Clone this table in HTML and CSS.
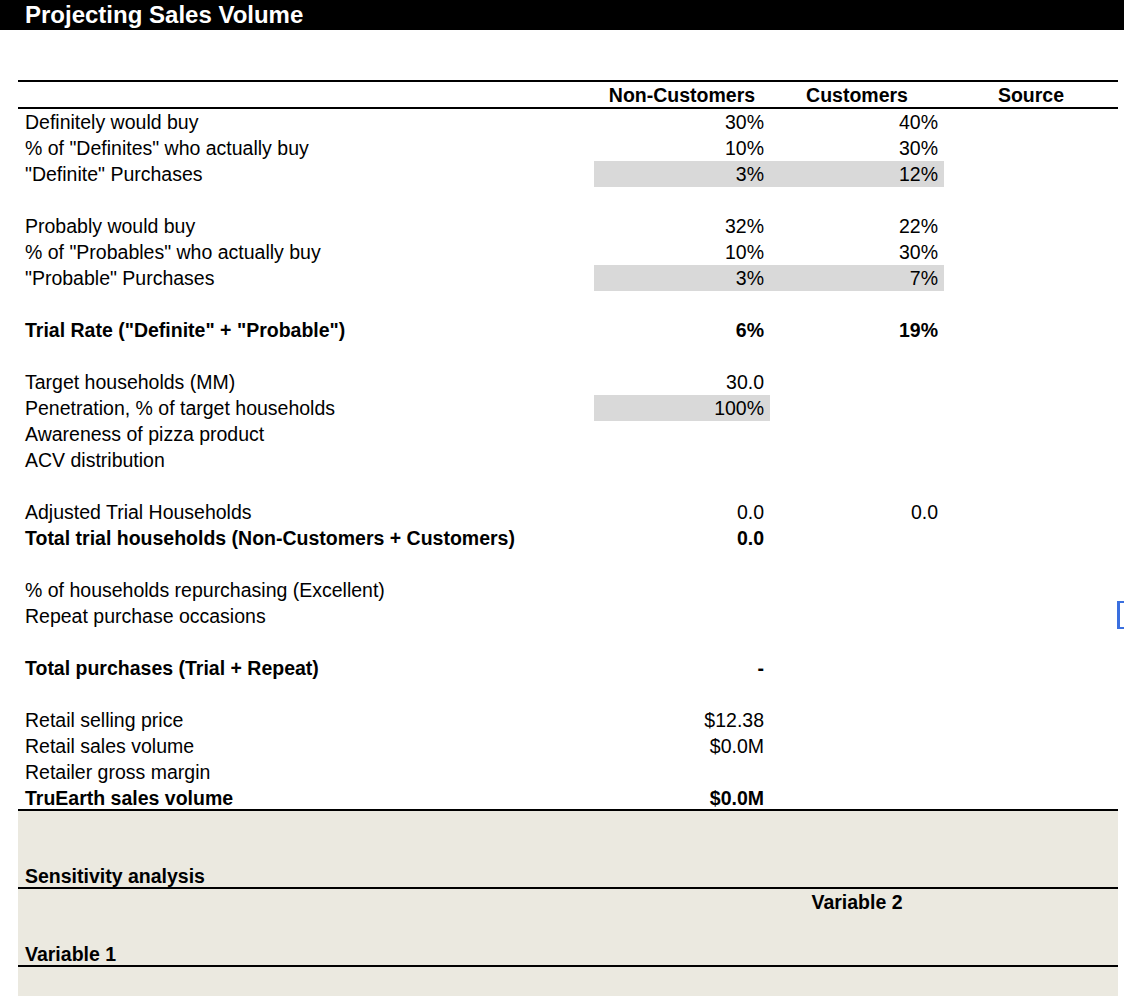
FILE: index.html
```html
<!DOCTYPE html>
<html lang="en">
<head>
<meta charset="utf-8">
<title>Projecting Sales Volume</title>
<link rel="stylesheet" href="styles.css">
</head>
<body>
<div class="titlebar">Projecting Sales Volume</div>
<div class="sheet">
  <div class="row head">
    <div class="cell label"></div>
    <div class="cell center">Non-Customers</div>
    <div class="cell center">Customers</div>
    <div class="cell center">Source</div>
  </div>

  <div class="row"><div class="cell label">Definitely would buy</div><div class="cell num">30%</div><div class="cell num">40%</div><div class="cell"></div></div>
  <div class="row"><div class="cell label">% of "Definites" who actually buy</div><div class="cell num">10%</div><div class="cell num">30%</div><div class="cell"></div></div>
  <div class="row"><div class="cell label">"Definite" Purchases</div><div class="cell num shade">3%</div><div class="cell num shade">12%</div><div class="cell"></div></div>
  <div class="row"></div>

  <div class="row"><div class="cell label">Probably would buy</div><div class="cell num">32%</div><div class="cell num">22%</div><div class="cell"></div></div>
  <div class="row"><div class="cell label">% of "Probables" who actually buy</div><div class="cell num">10%</div><div class="cell num">30%</div><div class="cell"></div></div>
  <div class="row"><div class="cell label">"Probable" Purchases</div><div class="cell num shade">3%</div><div class="cell num shade">7%</div><div class="cell"></div></div>
  <div class="row"></div>

  <div class="row bold"><div class="cell label">Trial Rate ("Definite" + "Probable")</div><div class="cell num">6%</div><div class="cell num">19%</div><div class="cell"></div></div>
  <div class="row"></div>

  <div class="row"><div class="cell label">Target households (MM)</div><div class="cell num">30.0</div><div class="cell"></div><div class="cell"></div></div>
  <div class="row"><div class="cell label">Penetration, % of target households</div><div class="cell num shade">100%</div><div class="cell"></div><div class="cell"></div></div>
  <div class="row"><div class="cell label">Awareness of pizza product</div><div class="cell"></div><div class="cell"></div><div class="cell"></div></div>
  <div class="row"><div class="cell label">ACV distribution</div><div class="cell"></div><div class="cell"></div><div class="cell"></div></div>
  <div class="row"></div>

  <div class="row"><div class="cell label">Adjusted Trial Households</div><div class="cell num">0.0</div><div class="cell num">0.0</div><div class="cell"></div></div>
  <div class="row bold"><div class="cell label">Total trial households (Non-Customers + Customers)</div><div class="cell num">0.0</div><div class="cell"></div><div class="cell"></div></div>
  <div class="row"></div>

  <div class="row"><div class="cell label">% of households repurchasing (Excellent)</div><div class="cell"></div><div class="cell"></div><div class="cell"></div></div>
  <div class="row"><div class="cell label">Repeat purchase occasions</div><div class="cell"></div><div class="cell"></div><div class="cell"></div></div>
  <div class="row"></div>

  <div class="row bold"><div class="cell label">Total purchases (Trial + Repeat)</div><div class="cell num">-</div><div class="cell"></div><div class="cell"></div></div>
  <div class="row"></div>

  <div class="row"><div class="cell label">Retail selling price</div><div class="cell num">$12.38</div><div class="cell"></div><div class="cell"></div></div>
  <div class="row"><div class="cell label">Retail sales volume</div><div class="cell num">$0.0M</div><div class="cell"></div><div class="cell"></div></div>
  <div class="row"><div class="cell label">Retailer gross margin</div><div class="cell"></div><div class="cell"></div><div class="cell"></div></div>
  <div class="row bold ruled"><div class="cell label">TruEarth sales volume</div><div class="cell num">$0.0M</div><div class="cell"></div><div class="cell"></div></div>

  <div class="sensitivity">
    <div class="row"></div>
    <div class="row"></div>
    <div class="row bold ruled"><div class="cell label">Sensitivity analysis</div></div>
    <div class="row bold"><div class="cell label"></div><div class="cell"></div><div class="cell center">Variable 2</div><div class="cell"></div></div>
    <div class="row"></div>
    <div class="row bold ruled"><div class="cell label">Variable 1</div></div>
    <div class="row"></div>
    <div class="row"></div>
  </div>
</div>
<div class="selection-edge"></div>
</body>
</html>
```

FILE: styles.css
```css
html, body {
  margin: 0;
  padding: 0;
  background: #ffffff;
  overflow: hidden;
}

body {
  font-family: "Liberation Sans", Arial, Helvetica, sans-serif;
  font-size: 19.5px;
  color: #000;
  width: 1124px;
  height: 996px;
}

.titlebar {
  background: #000;
  color: #fff;
  font-weight: bold;
  font-size: 24px;
  height: 30px;
  line-height: 29px;
  padding-left: 25px;
  box-sizing: border-box;
}

.sheet {
  margin: 50px 0 0 18px;
  width: 1100px;
}

.row {
  display: grid;
  grid-template-columns: 576px 176px 174px 174px;
  height: 26px;
  line-height: 26px;
  box-sizing: border-box;
}

.row.head {
  height: 29px;
  line-height: 26px;
  border-top: 2px solid #000;
  border-bottom: 2px solid #000;
  font-weight: bold;
}

.row.bold {
  font-weight: bold;
}

.row.ruled {
  border-bottom: 2px solid #000;
}

.cell {
  white-space: nowrap;
  overflow: visible;
}

.cell.label {
  padding-left: 7px;
}

.cell.num {
  text-align: right;
  padding-right: 6px;
}

.cell.center {
  text-align: center;
}

.cell.shade {
  background: #d9d9d9;
}

.sensitivity {
  background: #ebe9e0;
}

.selection-edge {
  position: absolute;
  left: 1117px;
  top: 601px;
  width: 10px;
  height: 28px;
  box-sizing: border-box;
  border-left: 3px solid #3a6fdf;
  border-top: 2px solid #3a6fdf;
  border-bottom: 2px solid #3a6fdf;
}
```
